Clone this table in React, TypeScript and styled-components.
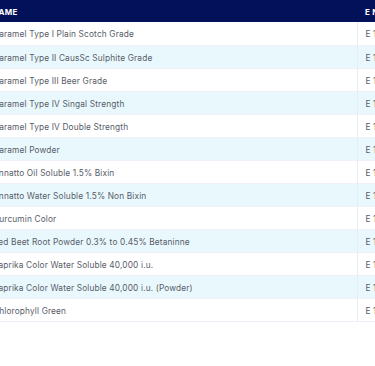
import React from "react";
import styled, { createGlobalStyle } from "styled-components";

const Global = createGlobalStyle`
  html, body {
    margin: 0;
    padding: 0;
    background: #ffffff;
    overflow: hidden;
  }
  body {
    font-family: Inter, "Noto Sans", sans-serif;
  }
  *, *::before, *::after {
    box-sizing: border-box;
  }
`;

const Wrap = styled.div`
  width: 375px;
  height: 366px;
  overflow: hidden;
  background: #fff;
`;

const Table = styled.table`
  margin-left: -20px;
  width: 460px;
  border-collapse: collapse;
  table-layout: fixed;
`;

const Col = styled.col<{ $w: number }>`
  width: ${(p) => p.$w}px;
`;

const HeadCell = styled.th<{ $first?: boolean }>`
  height: 22px;
  padding: 1px 0 0 ${(p) => (p.$first ? "12px" : "8px")};
  background: #03115a;
  color: #ffffff;
  font-size: 8px;
  font-weight: 700;
  letter-spacing: 0.3px;
  text-align: left;
  white-space: nowrap;
  overflow: hidden;
`;

const Row = styled.tr<{ $alt: boolean }>`
  background: ${(p) => (p.$alt ? "#e9f8fd" : "#ffffff")};
  border-bottom: 1px solid #eef2f8;
`;

const Cell = styled.td<{ $first?: boolean }>`
  height: 23px;
  padding: 2px 0 0 ${(p) => (p.$first ? "13px" : "8px")};
  color: #585c68;
  font-size: 8.3px;
  letter-spacing: 0.15px;
  white-space: nowrap;
  overflow: hidden;
  border-right: ${(p) => (p.$first ? "1px solid #e8ecf6" : "none")};
`;

const items: [string, string][] = [
  ["Caramel Type I Plain Scotch Grade", "E 150a"],
  ["Caramel Type II CausSc Sulphite Grade", "E 150b"],
  ["Caramel Type III Beer Grade", "E 150c"],
  ["Caramel Type IV Singal Strength", "E 150d"],
  ["Caramel Type IV Double Strength", "E 150d"],
  ["Caramel Powder", "E 150"],
  ["Annatto Oil Soluble 1.5% Bixin", "E 160b"],
  ["Annatto Water Soluble 1.5% Non Bixin", "E 160b"],
  ["Curcumin Color", "E 100"],
  ["Red Beet Root Powder 0.3% to 0.45% Betaninne", "E 162"],
  ["Paprika Color Water Soluble 40,000 i.u.", "E 160c"],
  ["Paprika Color Water Soluble 40,000 i.u. (Powder)", "E 160c"],
  ["Chlorophyll Green", "E 140"],
];

export default function App() {
  return (
    <Wrap>
      <Global />
      <Table>
        <colgroup>
          <Col $w={377} />
          <Col $w={83} />
        </colgroup>
        <thead>
          <tr>
            <HeadCell $first>NAME</HeadCell>
            <HeadCell>E NUMBER</HeadCell>
          </tr>
        </thead>
        <tbody>
          {items.map(([name, code], i) => (
            <Row key={name + i} $alt={i % 2 === 1}>
              <Cell $first>{name}</Cell>
              <Cell>{code}</Cell>
            </Row>
          ))}
        </tbody>
      </Table>
    </Wrap>
  );
}
